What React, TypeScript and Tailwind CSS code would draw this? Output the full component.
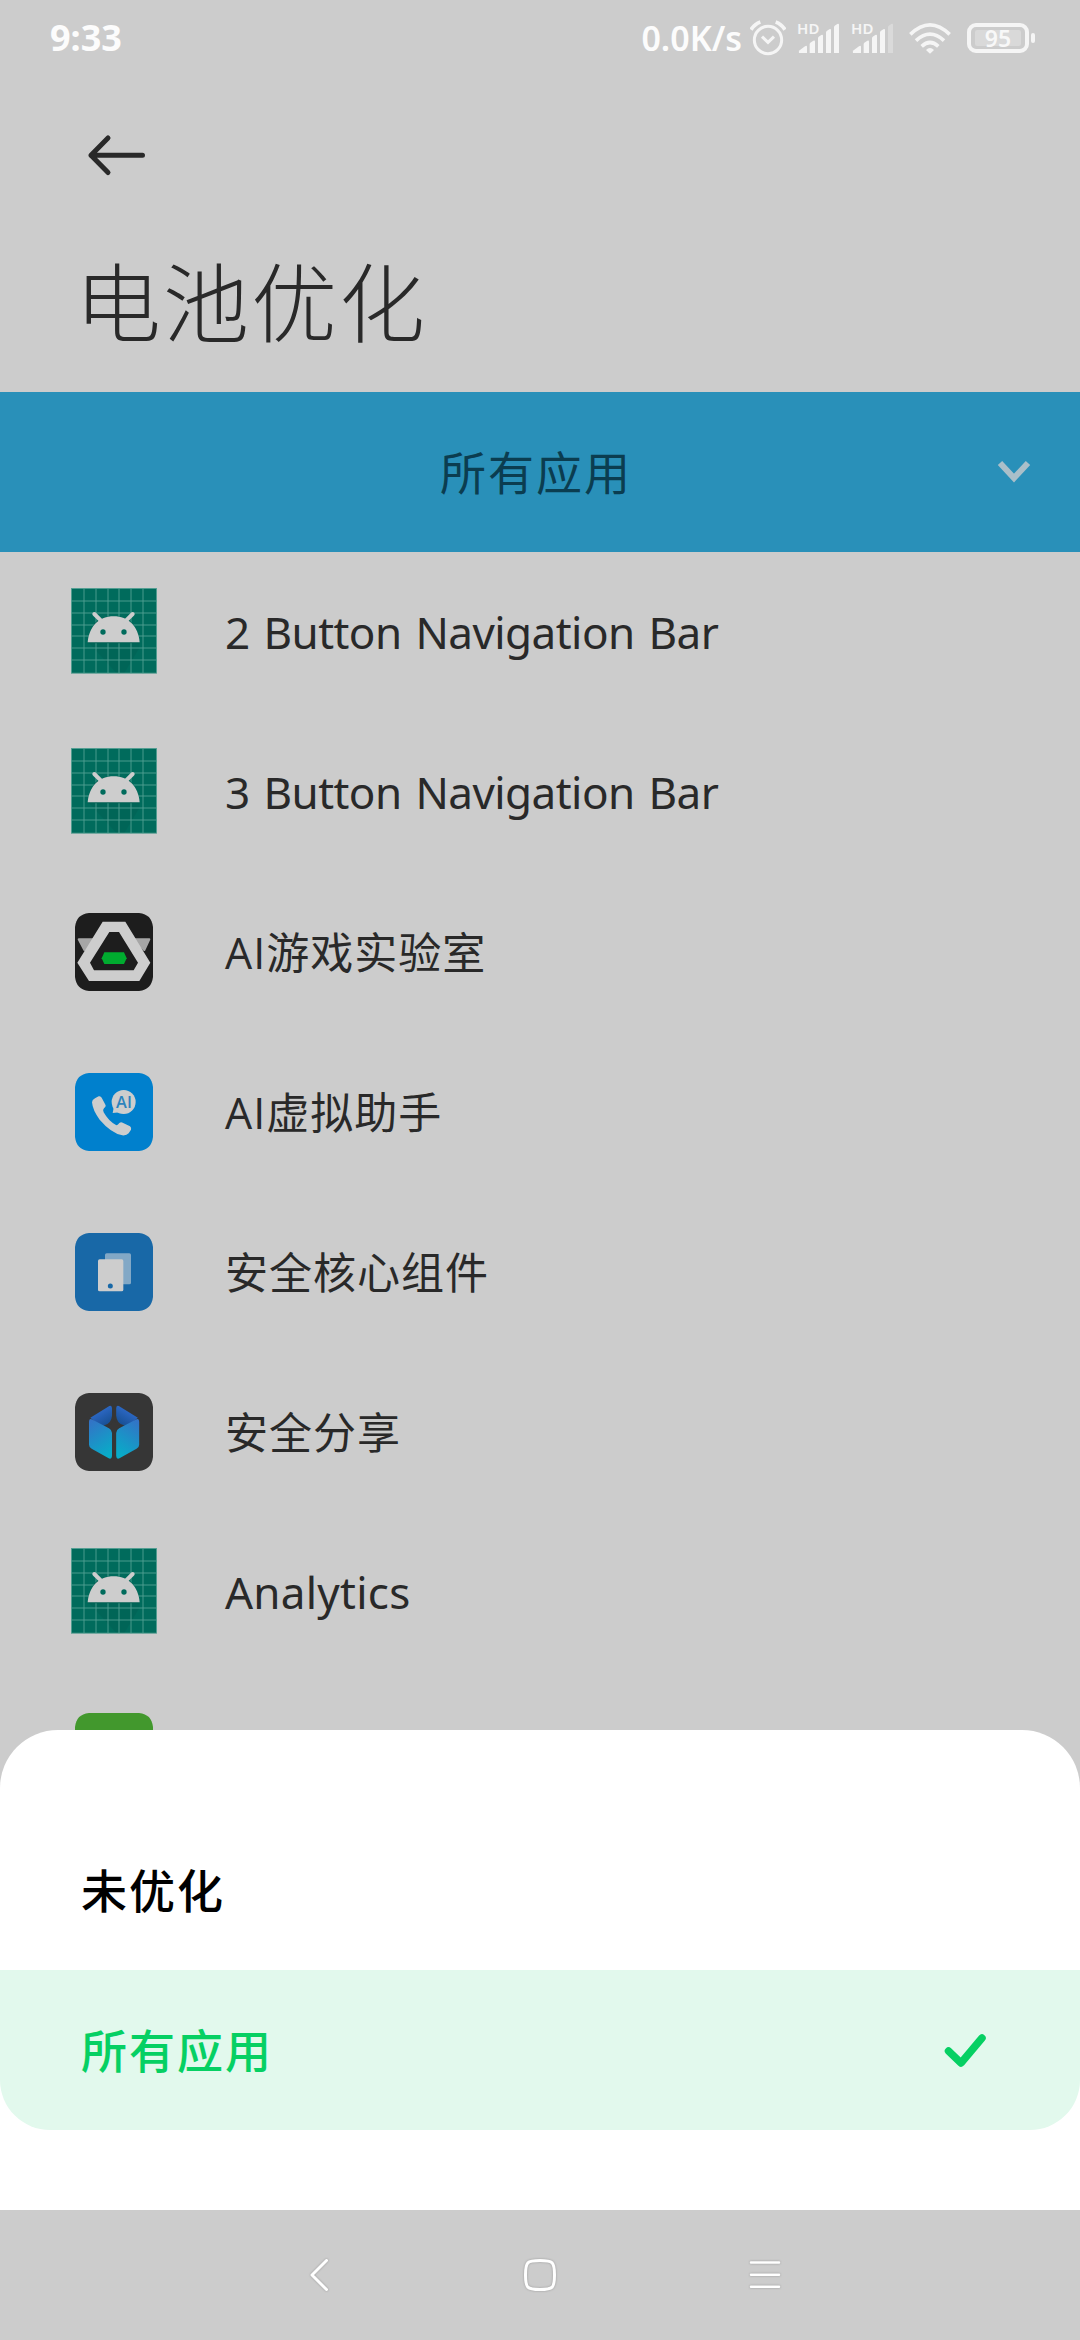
import type { ReactNode } from "react";

const sans = 'font-["Noto_Sans","Noto_Sans_CJK_SC",sans-serif]';

function AlarmIcon() {
  return (
    <svg className="h-[36px] w-[36px]" viewBox="0 0 108 108" fill="none" stroke="#f5f5f5" strokeWidth="9">
      <circle cx="54" cy="60" r="41" />
      <path d="M36 50 54 67 72 50" />
      <path d="M3 29Q14 12 31 6M77 6Q94 12 105 29" strokeWidth="11" />
    </svg>
  );
}

function SignalIcon({ weak }: { weak?: boolean }) {
  return (
    <div className="relative h-[32px] w-[42px]">
      <span className="absolute -top-[4px] left-0 text-[15px] leading-5 font-semibold tracking-[0.2px] text-[#f5f5f5]">
        HD
      </span>
      <svg className="block h-[32px] w-[42px]" viewBox="0 0 126 96" fill="#f5f5f5">
        <path d="M6 93Q4 89 8 85L24 73Q30 69 30 75V93Z" />
        <path d="M38 93V66Q38 64 40 62L49 56Q54 54 54 58V93Z" />
        <path d="M63 93V48Q63 46 65 44L73 39Q78 37 78 41V93Z" />
        <path d="M87 93V31Q87 29 89 27L97 22Q102 20 102 24V93Z" />
        <path d="M111 93V15Q111 13 113 11L121 6Q126 4 126 8V93Z" fill={weak ? "#dadada" : "#f5f5f5"} />
      </svg>
    </div>
  );
}

function WifiIcon() {
  return (
    <svg className="h-[32px] w-[42px]" viewBox="0 0 126 96" fill="none" stroke="#f5f5f5" strokeWidth="11">
      <path d="M4 37Q63 -20 122 37" />
      <path d="M21 56Q63 17 105 56" />
      <path d="M38 73Q63 50 88 73" />
      <path d="M63 95 51 84Q63 72 75 84Z" fill="#f5f5f5" stroke="none" />
    </svg>
  );
}

function Battery() {
  return (
    <div className="flex items-center gap-[2px]">
      <div className="flex h-[30px] w-[62px] items-center justify-center rounded-[9px] border-[4px] border-[#f5f5f5] p-[3px]">
        <div className="flex h-[16px] w-[46px] items-center justify-center rounded-[2px] bg-[#d9d9d9] text-[23px] leading-none font-semibold text-[#f8f8f8]">
          95
        </div>
      </div>
      <div className="h-[10px] w-[4px] rounded-[2px] bg-[#f5f5f5]" />
    </div>
  );
}

function StatusBar() {
  return (
    <div className="flex h-[76px] items-center pr-[45px] pl-[50px] text-[#fcfcfc]">
      <span className="text-[36px] leading-none font-bold">9:33</span>
      <span className="ml-auto text-[34px] leading-none font-semibold">0.0K/s</span>
      <div className="ml-[8px]">
        <AlarmIcon />
      </div>
      <div className="ml-[11px]">
        <SignalIcon />
      </div>
      <div className="ml-[12px]">
        <SignalIcon weak />
      </div>
      <div className="ml-[16px]">
        <WifiIcon />
      </div>
      <div className="ml-[16px]">
        <Battery />
      </div>
    </div>
  );
}

const lines = [39, 75, 111, 144, 180, 216];

function AndroidIcon() {
  return (
    <svg className="mb-[2px] h-[86px] w-[86px]" viewBox="0 0 258 258">
      <rect y="3" width="258" height="255" fill="#aab5b2" />
      <rect x="1" y="1" width="256" height="254" fill="#006b5c" />
      <path d="M52 163H206L205 180 160 255H136Z" fill="#006255" opacity=".7" />
      <g stroke="#55a194" strokeWidth="2.6">
        {lines.map((n) => (
          <path key={n} d={`M${n} 0V256M0 ${n}H256`} />
        ))}
        <rect x="1.5" y="1.5" width="255" height="254" fill="none" />
      </g>
      <path d="M50 166Q54 108 92 91Q128 78 164 91Q202 110 206 166Z" fill="#005f52" />
      <g fill="#cdcdcd">
        <path d="M50 163C54 115 84 85 128 85S202 115 206 163Z" />
        <path d="M70 78 93 101M185 78 162 101" stroke="#cdcdcd" strokeWidth="12" strokeLinecap="round" />
      </g>
      <circle cx="96" cy="132" r="8" fill="#006b5c" />
      <circle cx="159" cy="132" r="8" fill="#006b5c" />
    </svg>
  );
}

function Tile({ fill, children }: { fill: string; children?: ReactNode }) {
  return (
    <svg className="h-[78px] w-[78px]" viewBox="0 0 234 234">
      <path
        d="M42 0H192C219 4 230 15 234 42V192C230 219 219 230 192 234H42C15 230 4 219 0 192V42C4 15 15 4 42 0Z"
        fill={fill}
      />
      {children}
    </svg>
  );
}

function GameIcon() {
  return (
    <Tile fill="#1d1d1d">
      <g fill="#a6a6a6" stroke="#a6a6a6" strokeWidth="6" strokeLinejoin="round">
        <path d="M11 79H60L28 111Z" />
        <path d="M174 79H223L208 111Z" />
      </g>
      <path
        fillRule="evenodd"
        fill="#cdcdcd"
        d="M83 26H151L226 149 193 204H42L7 149ZM103 57 45 149 57 172H176L189 149 132 57Z"
      />
      <path d="M88 118H147L155 136 147 153H88L80 136Z" fill="#00ab2f" />
    </Tile>
  );
}

function CallIcon() {
  return (
    <Tile fill="#0080cd">
      <g fill="#cdcdcd">
        <path d="M51 88Q51 80 60 76L71 70Q77 68 80 74L92 97Q93 102 87 106Q82 111 86 118Q101 145 123 156Q128 158 133 150Q138 146 143 149L165 160Q170 164 168 170L161 181Q155 188 142 187Q108 180 74 140Q53 112 51 88Z" />
        <circle cx="146" cy="87" r="36" />
        <path d="M116 104 113 120 136 118Z" />
      </g>
      <text
        x="147"
        y="105"
        textAnchor="middle"
        className='font-["Open_Sans",sans-serif] text-[49px] font-semibold'
        fill="#2d83bd"
      >
        AI
      </text>
    </Tile>
  );
}

function CoreIcon() {
  return (
    <Tile fill="#1868a7">
      <rect x="90" y="61" width="78" height="93" rx="5" fill="#82a8c6" />
      <rect x="69" y="79" width="76" height="96" rx="5" fill="#cdcdcd" />
      <circle cx="106" cy="159" r="7.5" fill="#1868a7" />
    </Tile>
  );
}

function ShareHalf() {
  return (
    <>
      <path d="M46 74 103 39Q111 36 111 46V68Q109 90 90 96L78 102Z" fill="url(#flap)" />
      <path
        d="M42 86Q42 75 50 79L102 106Q111 111 111 120V188Q110 200 101 196L50 167Q42 163 42 155Z"
        fill="url(#face)"
      />
    </>
  );
}

function ShareIcon() {
  return (
    <Tile fill="#363636">
      <defs>
        <linearGradient id="flap" x1="0" y1="0" x2=".6" y2="1">
          <stop offset=".3" stopColor="#2e6ac9" />
          <stop offset="1" stopColor="#174f93" />
        </linearGradient>
        <linearGradient id="face" x1=".2" y1="0" x2=".6" y2="1">
          <stop offset="0" stopColor="#3373c6" />
          <stop offset="1" stopColor="#08acc8" />
        </linearGradient>
      </defs>
      <ShareHalf />
      <g transform="translate(234.5 0) scale(-1 1)">
        <ShareHalf />
      </g>
      <path d="M117 78Q121 94 138 101Q121 108 117 122Q113 108 96 101Q113 94 117 78Z" fill="#363636" />
    </Tile>
  );
}

const navLabel = "text-[44px] tracking-[-0.55px] [word-spacing:3px]";
const mixedLabel =
  'pt-[2px] font-["Open_Sans","Noto_Sans_CJK_SC",sans-serif] text-[43px] tracking-[1px]';

const apps: { name: string; icon: ReactNode; label: string }[] = [
  { name: "2 Button Navigation Bar", icon: <AndroidIcon />, label: navLabel },
  { name: "3 Button Navigation Bar", icon: <AndroidIcon />, label: navLabel },
  { name: "AI游戏实验室", icon: <GameIcon />, label: mixedLabel },
  { name: "AI虚拟助手", icon: <CallIcon />, label: mixedLabel },
  { name: "安全核心组件", icon: <CoreIcon />, label: mixedLabel },
  { name: "安全分享", icon: <ShareIcon />, label: mixedLabel },
  { name: "Analytics", icon: <AndroidIcon />, label: "text-[44px] tracking-[0.25px]" },
  { name: "", icon: <Tile fill="#42982d" />, label: mixedLabel },
];

export default function App() {
  return (
    <div className={`relative flex h-[2340px] w-[1080px] flex-col overflow-hidden bg-[#cccccc] text-[#292929] ${sans}`}>
      <StatusBar />
      <header className="flex h-[316px] flex-col pl-[75px]">
        <svg className="mt-[55px] ml-[11px] h-[48px] w-[62px] shrink-0" viewBox="0 0 62 48" fill="none" stroke="#292929" strokeWidth="5" strokeLinecap="round" strokeLinejoin="round">
          <path d="M22 7 5 24.300 22 41.500M5 24.300H56.500" />
        </svg>
        <h1 className="mt-[74px] text-[86px] leading-[100px] font-light tracking-[2px]">电池优化</h1>
      </header>
      <div className="relative flex h-[160px] shrink-0 items-center justify-center bg-[#2990b9] pr-[8px] text-[46px] tracking-[2px] text-[#0b3d50]">
        <span>所有应用</span>
        <svg className="absolute right-[48px] h-[24px] w-[36px]" viewBox="0 0 36 24" fill="none" stroke="#aabfc9" strokeWidth="6">
          <path d="M4 3 18 18 32 3" />
        </svg>
      </div>
      <ul className="shrink-0">
        {apps.map((app, i) => (
          <li key={i} className="flex h-[160px] items-center gap-[68px] pl-[71px]">
            <div className="flex w-[86px] justify-center">{app.icon}</div>
            <span className={app.label}>{app.name}</span>
          </li>
        ))}
      </ul>
      <section className="absolute inset-x-0 bottom-[130px] h-[480px] rounded-t-[58px] bg-white pt-[80px] text-[46px] font-medium tracking-[2px]">
        <div className="flex h-[160px] items-center pl-[81px] text-black">未优化</div>
        <div className="flex h-[160px] items-center justify-between rounded-b-[50px] bg-[#e2f9ed] pr-[92px] pl-[81px] text-[#06d063]">
          <span>所有应用</span>
          <svg className="h-[36px] w-[46px]" viewBox="0 0 46 36" fill="none" stroke="#06d063" strokeWidth="7.500" strokeLinecap="round" strokeLinejoin="round">
            <path d="M6.500 19 19 31 40 6" />
          </svg>
        </div>
      </section>
      <nav className="absolute inset-x-0 bottom-0 flex h-[130px] items-center justify-center bg-[#cccccc]">
        <svg className="mr-[185px] h-[40px] w-[40px] drop-shadow-[0_0_1px_#00000040]" viewBox="0 0 40 40" fill="none" stroke="#ffffff" strokeWidth="3" strokeLinecap="round" strokeLinejoin="round">
          <path d="M31.500 5.500 17 20 31.500 34.500" />
        </svg>
        <svg className="h-[40px] w-[40px] drop-shadow-[0_0_1px_#00000040]" viewBox="0 0 40 40" fill="none" stroke="#ffffff" strokeWidth="3">
          <path d="M20 5.500C33 5.500 34.500 7 34.500 20S33 34.500 20 34.500 5.500 33 5.500 20 7 5.500 20 5.500Z" />
        </svg>
        <svg className="ml-[185px] h-[40px] w-[40px] drop-shadow-[0_0_1px_#00000040]" viewBox="0 0 40 40" stroke="#ffffff" strokeWidth="2.500" strokeLinecap="round">
          <path d="M6 7.600H34M6 19.700H34M6 31.800H34" />
        </svg>
      </nav>
    </div>
  );
}
